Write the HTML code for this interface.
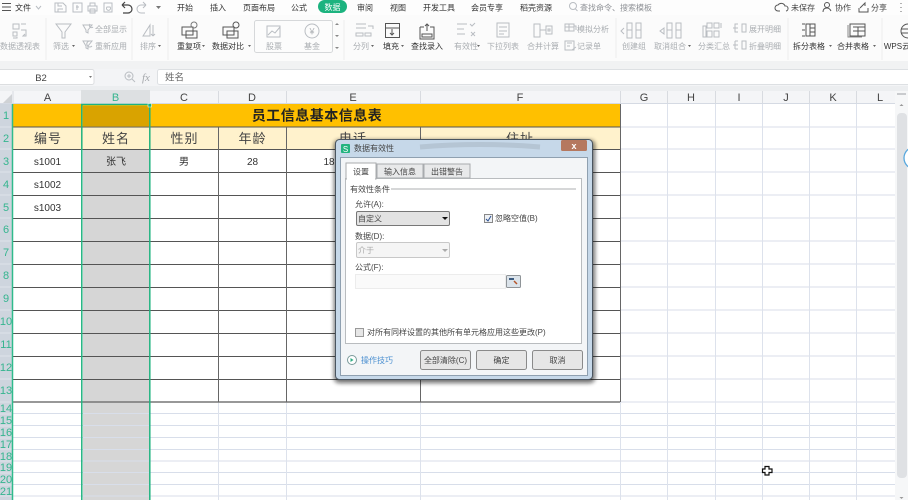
<!DOCTYPE html>
<html lang="zh"><head><meta charset="utf-8"><title>数据有效性</title>
<style>
html,body{margin:0;padding:0;width:908px;height:500px;overflow:hidden;background:#fff}
svg{display:block;filter:blur(.3px)}
text{font-family:"Liberation Sans","Noto Sans CJK SC",sans-serif}
.t{font-size:8px;fill:#3a3a3a;text-anchor:middle}
.g{font-size:8px;fill:#a9adb1;text-anchor:middle}
.k{font-size:8px;fill:#333;text-anchor:middle}
.gl{font-size:8px;fill:#a9adb1}
.h{font-size:11px;fill:#444;text-anchor:middle}
.r{font-size:11px;fill:#35b58f;text-anchor:middle}
.c2{font-size:13px;fill:#444;text-anchor:middle;letter-spacing:1px}
.c{font-size:10px;fill:#333;text-anchor:middle}
.d{font-size:8px;fill:#444}
.ic{fill:none;stroke:#b9bdc2;stroke-width:1}
.id{fill:none;stroke:#555;stroke-width:1}
</style></head><body>
<svg width="908" height="500" viewBox="0 0 908 500" xmlns="http://www.w3.org/2000/svg">
<defs><filter id="sh" x="-10%" y="-10%" width="120%" height="120%"><feGaussianBlur stdDeviation="2"/></filter></defs>
<!-- top + ribbon -->
<rect width="908" height="15" fill="#fdfdfd"/>
<rect y="15" width="908" height="46" fill="#fbfbfb"/>
<rect y="61" width="908" height="8" fill="#f1f2f3"/>
<rect y="69" width="908" height="17" fill="#f3f4f6"/>
<rect y="86" width="908" height="5" fill="#eceef0"/>
<path class="id" d="M2 3.500h9M2 7h9M2 10.500h9"/>
<text x="15" y="10.500" style="font-size:8px;fill:#333">文件</text>
<path d="M36 6l2.500 3 2.500-3" class="ic"/>
<path class="ic" d="M55 3h8l3 3v6H55zM58 3v3h4M58 12V9h5M73 3h9v9h-9zM76 7h3M77 5v5M88 6h9v5H88zM90 6V3h5v3M90 9h5v4h-5zM104 3h8v9h-8zM107 7a2 2 0 1 0 3 0z"/>
<path d="M122 5h6a3.500 3.500 0 0 1 0 8h-5M122 5l3-3M122 5l3 3" fill="none" stroke="#444" stroke-width="1.200"/>
<path class="ic" d="M146 5h-5a3.500 3.500 0 0 0 0 8h4M146 5l-3-3M146 5l-3 3"/>
<path d="M156 6h5l-2.500 3z" fill="#777"/>
<text class="k" x="185" y="10.500">开始</text><text class="k" x="218" y="10.500">插入</text><text class="k" x="259" y="10.500">页面布局</text><text class="k" x="299" y="10.500">公式</text>
<rect x="318" y="0" width="29" height="13" rx="6.500" fill="#1cb37f"/><text x="332.500" y="10" style="font-size:8px;fill:#fff;text-anchor:middle">数据</text>
<text class="k" x="365" y="10.500">审阅</text><text class="k" x="398" y="10.500">视图</text><text class="k" x="439" y="10.500">开发工具</text><text class="k" x="487" y="10.500">会员专享</text><text class="k" x="536" y="10.500">稻壳资源</text>
<circle cx="573" cy="6" r="3.500" class="ic"/><path class="ic" d="M575.500 9l2 2"/>
<text x="580" y="10.500" class="gl" style="fill:#8d9095">查找命令、搜索模板</text>
<path class="id" d="M780 11h-2a3 3 0 0 1 0-6 4 4 0 0 1 7 1 2.500 2.500 0 0 1 1 5"/>
<text x="791" y="10.500" style="font-size:8px;fill:#444">未保存</text>
<circle cx="827" cy="5" r="2.500" class="id"/><path class="id" d="M823 12c0-3 2-4 4-4s3 1 4 3"/>
<text x="835" y="10.500" style="font-size:8px;fill:#444">协作</text>
<path class="id" d="M859 8v4h9V8M860 8l5-5v3"/>
<text x="871" y="10.500" style="font-size:8px;fill:#444">分享</text>
<path d="M901 3v1M901 7v1M901 11v1" stroke="#666"/>

<!-- ribbon separators -->
<path d="M46 18v42M132 18v42M168 18v42M344 20v40M616 18v40M788 18v42M882 18v42" stroke="#ececec"/>
<!-- ribbon icons -->
<path class="ic" d="M13 24h6v5h-6zM13 32h4v4h-4zM13 38h4v-1M21 24h5M21 30h5v6h-3l2-2"/>
<path class="ic" d="M56 24h15l-6 8v6h-3v-6zM83 25h9l-4 5v3l-2-1v-2zM90 24a2 2 0 1 0 3 3"/>
<path class="ic" d="M83 41h9l-4 5v3l-2-1v-2zM90 41a3 3 0 1 0 2 5"/>
<path class="ic" d="M143 36l7-11v11zM153 25v11M153 36l-2-2M153 36l2-2"/>
<path class="id" d="M182 27h11v8h-11zM186 31h11v7h-11z"/><circle cx="194" cy="25" r="3" fill="none" stroke="#777"/>
<path class="id" d="M223 27h11v8h-11zM227 31h11v7h-11z"/><circle cx="236" cy="25" r="3" fill="none" stroke="#555"/>
<rect x="254.500" y="20.500" width="78" height="32" rx="2" fill="#fcfcfc" stroke="#d6d8da"/>
<path class="ic" d="M267 26h13v11h-13zM268 35l4-4 3 2 5-6"/>
<circle cx="312" cy="31" r="7" class="ic"/><text x="312" y="34.500" style="font-size:9px;fill:#b0b3b7;text-anchor:middle">¥</text>
<path d="M335 25l2-2 2 2zM335 35h4l-2 2zM335 47h4l-2 2z" fill="#888"/>
<path class="ic" d="M356 24h10M356 28h10M356 33h7v3h-7zM365 33h6v3h-6zM368 26h5v3"/>
<rect x="385.500" y="23.500" width="14" height="14" class="id"/><path class="id" d="M385 28h14M392 29v6M390 33l2 2 2-2"/>
<path class="id" d="M420 27h4M430 27h4v12h-14V27M427 24v7M425 26l2-2 2 2M422 34h10v3h-10z"/>
<path class="ic" d="M457 24h10M457 29h7M457 34h8M470 24l2 2 3-3M471 32l4 4M475 32l-4 4"/>
<path class="ic" d="M497 23h12v14h-12zM499 27h8M499 31h8M499 34h5"/>
<path class="ic" d="M534 24h6v13h-6zM546 26h6v8h-6zM540 30h6M548 29h2v2h-2z"/>
<path class="ic" d="M565 24h9v7h-9zM565 27h9M569 24v7M574 26h2v4M565 41h9v9h-9zM567 43h5M567 46h3M572 50l4-3"/>
<path class="ic" d="M627 23h5v15h-5zM636 23h5v15h-5zM627 30h5M636 30h5M624 28l-3 3 3 3"/>
<path class="ic" d="M667 23h5v15h-5zM676 23h5v15h-5zM667 30h5M676 30h5M664 28l-4 3 4 3z"/>
<path class="ic" d="M707 23h5v5h-5zM714 23h5v5h-5zM721 23v5M707 31h5v6h-5zM714 31h5v6h-5zM703 26h3v11h-3z"/>
<path class="ic" d="M738 24h-3v8h3M742 24h4v8h-4zM738 28h-5M735 41h3M735 49h3M735 41v8M742 41h4v8h-4zM733 45h5"/>
<path class="id" d="M806 24h9v12h-9zM810 24v12M802 24h3M802 30h3M802 36h3M810 28h5M810 32h5"/>
<path class="id" d="M850 24h15v12h-15zM853 27h12M853 31h12M858 27v9"/><path d="M848 25v12h14" fill="none" stroke="#888"/>
<path class="id" d="M908 24a7 7 0 0 0 0 14M901 29h7M901 33h7"/>
<!-- ribbon labels -->
<text class="g" x="20" y="49">数据透视表</text><text class="g" x="61" y="49">筛选</text><text class="g" x="148" y="49">排序</text>
<text class="k" x="189" y="49">重复项</text><text class="k" x="228" y="49">数据对比</text>
<text class="g" x="274" y="49">股票</text><text class="g" x="312" y="49">基金</text><text class="g" x="361" y="49">分列</text>
<text class="k" x="391" y="49">填充</text><text class="k" x="427" y="49">查找录入</text>
<text class="g" x="466" y="49">有效性</text><text class="g" x="503" y="49">下拉列表</text><text class="g" x="543" y="49">合并计算</text>
<text class="g" x="634" y="49">创建组</text><text class="g" x="670" y="49">取消组合</text><text class="g" x="714" y="49">分类汇总</text>
<text class="k" x="809" y="49">拆分表格</text><text class="k" x="853" y="49">合并表格</text><text class="k" x="897" y="49">WPS云</text>
<text class="gl" x="95" y="32">全部显示</text><text class="gl" x="95" y="49">重新应用</text>
<text class="gl" x="577" y="32">模拟分析</text><text class="gl" x="577" y="49">记录单</text>
<text class="gl" x="749" y="32">展开明细</text><text class="gl" x="749" y="49">折叠明细</text>
<path d="M72 45h3l-1.500 2zM158 45h3l-1.500 2zM202 45h3l-1.500 2zM248 45h3l-1.500 2zM371 45h3l-1.500 2zM401 45h3l-1.500 2zM477 45h3l-1.500 2zM688 45h3l-1.500 2zM829 45h3l-1.500 2zM873 45h3l-1.500 2z" fill="#666"/>

<!-- formula bar -->
<rect x="-2" y="69.500" width="96" height="15" rx="2" fill="#fff" stroke="#dcdee0"/>
<text x="41" y="81" style="font-size:9.500px;fill:#444;text-anchor:middle">B2</text>
<path d="M89 76h3l-1.500 2z" fill="#777"/>
<circle cx="129" cy="76" r="4" class="ic"/><path class="ic" d="M132 79l3 3M127 76h4M129 74v4"/>
<text x="142" y="81" style="font-size:11px;font-style:italic;fill:#a5a8ac;font-family:'Liberation Serif',serif">fx</text>
<rect x="157.500" y="69.500" width="755" height="15" rx="2" fill="#fff" stroke="#dde0e3"/>
<text x="165" y="80.500" style="font-size:9.500px;fill:#666">姓名</text>

<!-- column header -->
<rect y="91" width="895" height="13" fill="#f4f5f7"/>
<rect x="81" y="90" width="69" height="14" fill="#dde0e2"/>
<path d="M3 103l9-9v9z" fill="#cfd2d5"/>
<path d="M13 91v13M218.500 91v13M286.500 91v13M420.500 91v13M620.500 91v13M667.500 91v13M715.500 91v13M762.500 91v13M809.500 91v13M856.500 91v13" stroke="#d8dbe0"/>
<path d="M0 103.500h895" stroke="#d5dae3"/>
<text class="h" x="47.500" y="101">A</text><text class="h" x="115.500" y="101" style="fill:#35b58f">B</text><text class="h" x="184" y="101">C</text><text class="h" x="252" y="101">D</text><text class="h" x="353" y="101">E</text><text class="h" x="520" y="101">F</text><text class="h" x="644" y="101">G</text><text class="h" x="691" y="101">H</text><text class="h" x="739" y="101">I</text><text class="h" x="786" y="101">J</text><text class="h" x="833" y="101">K</text><text class="h" x="880" y="101">L</text>

<!-- row header -->
<rect x="0" y="104" width="13" height="396" fill="#ced5de"/>
<path d="M0 127h13M0 149h13M0 172h13M0 195h13M0 218h13M0 241h13M0 264h13M0 287h13M0 310h13M0 333h13M0 356h13M0 379h13M0 402h13M0 414h13M0 426h13M0 438h13M0 449h13M0 461h13M0 473h13M0 485h13M0 496h13" stroke="#dfe3e9"/>
<text class="r" x="6" y="119">1</text><text class="r" x="6" y="142">2</text><text class="r" x="6" y="165">3</text><text class="r" x="6" y="188">4</text><text class="r" x="6" y="211">5</text><text class="r" x="6" y="233">6</text><text class="r" x="6" y="256">7</text><text class="r" x="6" y="279">8</text><text class="r" x="6" y="302">9</text><text class="r" x="6" y="325">10</text><text class="r" x="6" y="348">11</text><text class="r" x="6" y="371">12</text><text class="r" x="6" y="394">13</text>
<text class="r" x="6" y="412">14</text><text class="r" x="6" y="424">15</text><text class="r" x="6" y="436">16</text><text class="r" x="6" y="448">17</text><text class="r" x="6" y="460">18</text><text class="r" x="6" y="471">19</text><text class="r" x="6" y="483">20</text><text class="r" x="6" y="495">21</text>

<!-- fills -->
<rect x="13" y="104" width="607" height="23" fill="#ffc000"/>
<rect x="13" y="127" width="607" height="22" fill="#fff2cc"/>
<rect x="83" y="106" width="66" height="20" fill="#d9a300"/>
<rect x="83" y="128" width="66" height="21" fill="#fff2cc"/>
<rect x="83" y="150" width="66" height="350" fill="#d6d6d6"/>

<!-- light grid -->
<path d="M620 127h275M620 149h275M620 172h275M620 195h275M620 218h275M620 241h275M620 264h275M620 287h275M620 310h275M620 333h275M620 356h275M620 379h275M620 402h275M13 413.500h882M13 425.500h882M13 437.500h882M13 449.500h882M13 461h882M13 472.500h882M13 484.500h882M13 496h882" stroke="#d8deea"/>
<path d="M218.500 402v98M286.500 402v98M420.500 402v98M620.500 402v98M667.500 104v396M715.500 104v396M762.500 104v396M809.500 104v396M856.500 104v396" stroke="#dde2ec"/>
<!-- dark grid -->
<path d="M13 127h607M13 149.500h607M13 172.500h607M13 195.500h607M13 218.500h607M13 241.500h607M13 264.500h607M13 287.500h607M13 310.500h607M13 333.500h607M13 356.500h607M13 379.500h607" stroke="#555"/>
<path d="M13 402h607" stroke="#777" stroke-width="1.500"/>
<path d="M218.500 127v275M286.500 127v275M420.500 127v275M620.500 104v298" stroke="#666"/>
<!-- selection -->
<path d="M12.500 104v396" stroke="#2fbb8c" stroke-width="1.500"/>
<path d="M81.800 104v396M149.800 104v396M81 104.500h69" stroke="#20b27f" stroke-width="1.500" fill="none"/>
<rect x="148" y="103.500" width="3.500" height="3.500" fill="#20b27f" stroke="#fff" stroke-width=".5"/>

<!-- cell text -->
<text x="317" y="120.500" style="font-size:14px;font-weight:bold;fill:#222;text-anchor:middle;letter-spacing:.5px">员工信息基本信息表</text>
<text class="c2" x="48" y="143">编号</text><text class="c2" x="116" y="143">姓名</text><text class="c2" x="184.500" y="143">性别</text><text class="c2" x="252.500" y="143">年龄</text><text class="c2" x="353" y="143">电话</text><text class="c2" x="520" y="143">住址</text>
<text class="c" x="47.500" y="165">s1001</text><text class="c" x="47.500" y="188">s1002</text><text class="c" x="47.500" y="211">s1003</text>
<text class="c" x="116" y="165">张飞</text><text class="c" x="184" y="165">男</text><text class="c" x="252.500" y="165">28</text><text class="c" x="329" y="165">18</text>

<!-- scrollbar -->
<rect x="895" y="91" width="13" height="409" fill="#f6f7f8"/>
<rect x="897" y="93" width="9" height="2" fill="#c9cbce"/>
<path d="M899.500 106h4l-2-2z" fill="#999"/>
<rect x="897" y="113" width="10" height="365" rx="4" fill="#dfe1e4"/>
<path d="M899.500 497h4l-2 2z" fill="#999"/>
<circle cx="915" cy="158" r="11" fill="#fff" stroke="#58a8de" stroke-width="1.300"/>

<!-- cursor -->
<path d="M765 466.500h4v2.500h3v3.500h-3v2.500h-4v-2.500h-2.500v-3.500h2.500z" fill="#fff" stroke="#111" stroke-width="1.200"/>

<!-- dialog -->
<rect x="334" y="140" width="261" height="243" rx="5" fill="#111" opacity=".6" filter="url(#sh)"/>
<rect x="335.500" y="139.500" width="257" height="240" rx="4" fill="#c6d8e9" stroke="#4a5560"/>
<path d="M420 147q60-5 120 0" stroke="#a3b2c0" stroke-width="5" fill="none" opacity=".5"/>
<rect x="561" y="140" width="26" height="11" rx="1.500" fill="#b5785f"/>
<text x="574" y="149" style="font-size:9px;font-weight:bold;fill:#fff;text-anchor:middle">x</text>
<rect x="341" y="144" width="9" height="9" rx="1" fill="#22b37f"/>
<text x="345.500" y="152" style="font-size:8px;fill:#fff;text-anchor:middle">S</text>
<text x="354" y="151" class="d">数据有效性</text>
<rect x="340.500" y="157.500" width="247" height="218" fill="#f3f5f7" stroke="#8fa0b0"/>
<rect x="345.500" y="178.500" width="236" height="165" fill="#fff" stroke="#b9bcbf"/>
<path d="M377 178v-14h46v14zM424 178v-14h46v14z" fill="#e8e9ea" stroke="#a8abae"/>
<path d="M346 179v-16h30v16z" fill="#fff" stroke="#a8abae"/><rect x="347" y="177" width="28" height="3" fill="#fff"/>
<text class="d" x="353" y="174.500">设置</text><text class="d" x="384" y="174.500">输入信息</text><text class="d" x="431" y="174.500">出错警告</text>
<text class="d" x="350" y="192">有效性条件</text><path d="M391 189h185" stroke="#c8cacc" stroke-width="1.500"/>
<text class="d" x="355" y="207">允许(A):</text>
<rect x="356.500" y="211.500" width="93" height="14" rx="1.500" fill="#e3e3e3" stroke="#777"/>
<text class="d" x="358" y="221.500">自定义</text><path d="M442 217h6l-3 3z" fill="#111"/>
<rect x="484.500" y="214.500" width="8" height="8" fill="#eef1f5" stroke="#888"/><path d="M486 219l2 2 3-5" stroke="#2a4f90" stroke-width="1" fill="none"/>
<text class="d" x="495" y="221">忽略空值(B)</text>
<text class="d" x="355" y="239">数据(D):</text>
<rect x="356.500" y="242.500" width="93" height="15" rx="1.500" fill="#f5f5f5" stroke="#c8c8c8"/>
<text x="358" y="253" style="font-size:8px;fill:#aaa">介于</text><path d="M442 249h6l-3 3z" fill="#aaa"/>
<text class="d" x="355" y="270">公式(F):</text>
<rect x="355.500" y="274.500" width="150" height="14" fill="#fafafa" stroke="#ececec"/>
<rect x="506.500" y="275.500" width="14" height="12" rx="1" fill="#dbe3ea" stroke="#8f9498"/>
<path d="M509 278h5v2h-5z" fill="#3d5c80"/><path d="M514 281l3 3" stroke="#b5552a" stroke-width="1.500"/>
<rect x="355.500" y="328.500" width="8" height="8" fill="#e6e6e6" stroke="#999"/>
<text class="d" x="367" y="335">对所有同样设置的其他所有单元格应用这些更改(P)</text>
<circle cx="352" cy="360" r="4.500" fill="#fff" stroke="#7a9a9a"/><path d="M350.500 358l3 2-3 2z" fill="#2fae84"/>
<text x="361" y="363" style="font-size:8px;fill:#4a8fd0">操作技巧</text>
<rect x="420.500" y="350.500" width="50" height="19" rx="2" fill="#e6e6e6" stroke="#8a8a8a"/>
<rect x="476.500" y="350.500" width="50" height="19" rx="2" fill="#e6e6e6" stroke="#8a8a8a"/>
<rect x="532.500" y="350.500" width="50" height="19" rx="2" fill="#e6e6e6" stroke="#8a8a8a"/>
<text class="d" x="445.500" y="363" text-anchor="middle">全部清除(C)</text>
<text class="d" x="501.500" y="363" text-anchor="middle">确定</text>
<text class="d" x="557.500" y="363" text-anchor="middle">取消</text>
</svg>
</body></html>
